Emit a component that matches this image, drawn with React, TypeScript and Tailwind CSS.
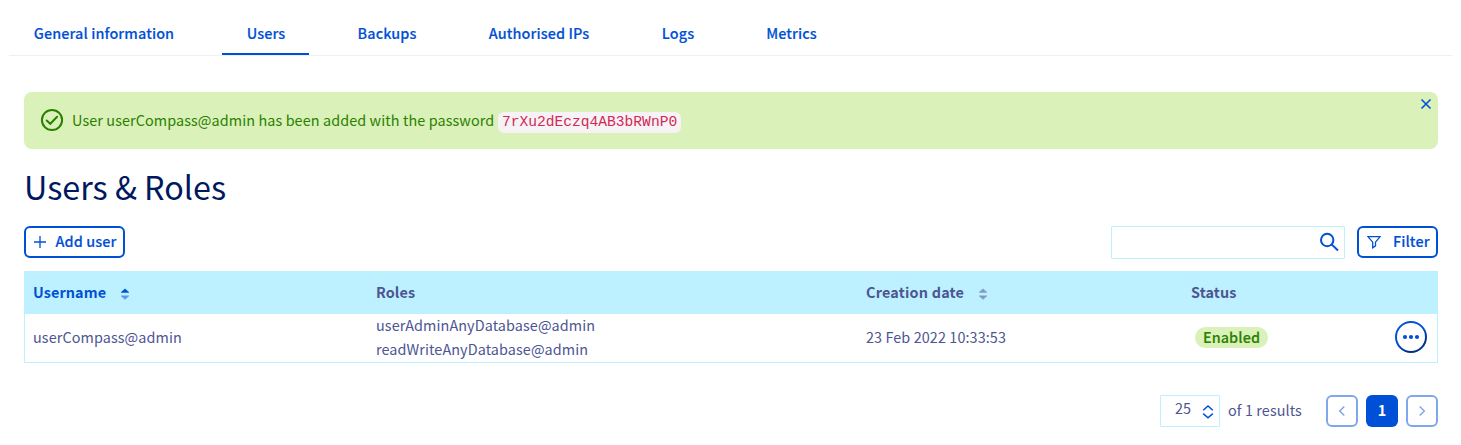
import React from "react";

const tabs = [
  { label: "General information", width: "w-[189px]", active: false },
  { label: "Users", width: "w-[87px]", active: true },
  { label: "Backups", width: "w-[107px]", active: false },
  { label: "Authorised IPs", width: "w-[149px]", active: false },
  { label: "Logs", width: "w-[81px]", active: false },
  { label: "Metrics", width: "w-[98px]", active: false },
];

function SortIcon({ className, dim }: { className: string; dim: boolean }) {
  return (
    <svg width="10" height="12" viewBox="0 0 10 12" className={className} fill="currentColor" stroke="currentColor" strokeWidth="0.8" strokeLinejoin="round">
      <path d="M1.3 4.3 5 .9l3.7 3.4z" opacity={dim ? 0.55 : 1} />
      <path d="M1.3 7.9h7.4L5 11.3z" opacity="0.55" />
    </svg>
  );
}

export default function App() {
  return (
    <div className="h-[445px] w-[1461px] overflow-hidden bg-white font-['Noto_Sans_CJK_SC','Noto_Sans_CJK_JP',sans-serif] text-[14.4px] leading-6 tracking-[0.095px] text-[#4d5592]">
      <nav className="mx-[9px] flex h-14 gap-6 border-b border-[#e6f1fa] pt-3">
        {tabs.map((tab) => (
          <a
            key={tab.label}
            className={`${tab.width} ${tab.active ? "border-[#0050d7]" : "border-transparent"} flex h-[43px] justify-center whitespace-nowrap border-b-2 pl-px pt-[9px] font-medium text-[#0050d7] [-webkit-text-stroke:0.15px]`}
          >
            {tab.label}
          </a>
        ))}
      </nav>

      <main className="mx-6 w-[1414px] pt-9">
        <div className="flex h-[57px] items-start rounded-lg bg-[#daf1b9] pl-4 text-[#2b8000]">
          <svg width="24" height="24" viewBox="0 0 24 24" className="mt-4 shrink-0" fill="none" stroke="currentColor" strokeWidth="2">
            <circle cx="12" cy="12" r="10.1" />
            <path d="m6.7 12.5 3.6 3.3 6.8-7" strokeLinecap="round" />
          </svg>
          <p className="ml-2 mt-4 flex whitespace-nowrap">
            <span className="w-[422px]">User userCompass@admin has been added with the password</span>
            <code className="ml-1 mt-1 h-[21px] w-[183px] rounded-md bg-[#f7f2f6] px-1 font-['Liberation_Mono',monospace] text-[14.6px] leading-[21px] tracking-normal text-[#cf2a55]">
              7rXu2dEczq4AB3bRWnP0
            </code>
          </p>
          <svg width="12" height="12" viewBox="0 0 12 12" className="ml-auto mr-1.5 mt-1.5 text-[#0050d7]" fill="none" stroke="currentColor" strokeWidth="1.6">
            <path d="m1.5 1.5 9 9m0-9-9 9" />
          </svg>
        </div>

        <h1 className="mt-[15px] h-[46px] text-[32.3px] leading-[45px] tracking-normal text-[#00185e]">Users &amp; Roles</h1>

        <div className="mt-4 flex h-[33px] items-start">
          <button className="flex h-8 w-[101px] items-center rounded-md border-2 border-[#0050d7] pl-2 font-medium text-[#0050d7]">
            <svg width="12" height="12" viewBox="0 0 12 12" fill="none" stroke="currentColor" strokeWidth="1.3">
              <path d="M6 0v12M0 6h12" />
            </svg>
            <span className="mb-0.5 ml-[9.5px] whitespace-nowrap [-webkit-text-stroke:0.15px]">Add user</span>
          </button>
          <div className="ml-auto flex h-[33px] w-[234px] items-start justify-end rounded-[1px] border border-[#bef1ff] pr-[5px] pt-[5px] text-[#0050d7]">
            <svg width="20" height="20" viewBox="0 0 20 20" fill="none" stroke="currentColor" strokeWidth="2">
              <circle cx="8.2" cy="8" r="6.2" />
              <path d="m12.6 12.4 6.4 6.1" />
            </svg>
          </div>
          <button className="ml-3 flex h-8 w-[81px] items-center rounded-md border-2 border-[#0050d7] pl-2 font-medium text-[#0050d7]">
            <svg width="14" height="14" viewBox="0 0 14 14" fill="none" stroke="currentColor" strokeWidth="1.3">
              <path d="M.9 1.6h12.2L8.5 7.2v3.6l-2.8 2V7.2z" />
            </svg>
            <span className="mb-0.5 ml-3 [-webkit-text-stroke:0.15px]">Filter</span>
          </button>
        </div>

        <div className="mt-3 h-[92px] border border-[#bef1ff]">
          <div className="grid h-[42px] grid-cols-[343px_490px_325px_1fr] items-center bg-[#bef1ff] pb-0.5 pl-2 font-bold">
            <div className="flex items-center text-[#0050d7]">
              Username
              <SortIcon className="ml-3.5 mt-1" dim={false} />
            </div>
            <div>Roles</div>
            <div className="flex items-center">
              <span className="tracking-[0.2px]">Creation date</span>
              <SortIcon className="ml-3.5 mt-1" dim />
            </div>
            <div>Status</div>
          </div>
          <div className="grid h-12 grid-cols-[343px_490px_325px_1fr] grid-rows-[46px] items-center pl-2">
            <div>userCompass@admin</div>
            <div>
              <div>userAdminAnyDatabase@admin</div>
              <div>readWriteAnyDatabase@admin</div>
            </div>
            <div>23 Feb 2022 10:33:53</div>
            <div className="flex items-center justify-between pl-1 pr-2.5">
              <span className="flex h-[21px] w-[73px] items-center justify-center rounded-full bg-[#daf1b9] font-medium text-[#2b8000] [-webkit-text-stroke:0.15px]">
                Enabled
              </span>
              <svg width="32" height="32" viewBox="0 0 32 32">
                <defs>
                  <linearGradient id="ring" x1="0.2" y1="0" x2="0.8" y2="1">
                    <stop offset="0.45" stopColor="#0050d7" />
                    <stop offset="0.8" stopColor="#00308a" />
                  </linearGradient>
                </defs>
                <circle cx="16" cy="16" r="15" fill="white" stroke="url(#ring)" strokeWidth="2" />
                <g fill="#0050d7">
                  <circle cx="10" cy="16" r="2.1" />
                  <circle cx="16" cy="16" r="2.1" />
                  <circle cx="22" cy="16" r="2.1" />
                </g>
              </svg>
            </div>
          </div>
        </div>

        <div className="mt-8 flex h-8 items-center justify-end">
          <div className="flex h-8 w-[60px] items-start rounded-[1px] border border-[#bef1ff] pl-3.5">
            <span className="w-4">25</span>
            <svg width="12" height="14" viewBox="0 0 12 14" className="ml-[11px] mt-[9px]" fill="none" stroke="#0050d7" strokeWidth="1.5">
              <path d="M1.2 5.2 6 1l4.8 4.2M1.2 8.6 6 12.8l4.8-4.2" />
            </svg>
          </div>
          <span className="mb-0.5 ml-2 w-[98px] whitespace-nowrap">of 1 results</span>
          <div className="flex gap-2">
            <button className="flex size-8 items-center justify-center rounded-md border-2 border-[#7fa7eb] text-[#7fa7eb]">
              <svg width="8" height="12" viewBox="0 0 8 12" fill="none" stroke="currentColor" strokeWidth="1.5">
                <path d="M6.3 1.5 1.7 6l4.6 4.5" />
              </svg>
            </button>
            <button className="flex size-8 items-center justify-center rounded-md bg-[#0050d7] pb-0.5 font-bold text-white">1</button>
            <button className="flex size-8 items-center justify-center rounded-md border-2 border-[#7fa7eb] text-[#7fa7eb]">
              <svg width="8" height="12" viewBox="0 0 8 12" fill="none" stroke="currentColor" strokeWidth="1.5">
                <path d="M1.7 1.5 6.3 6l-4.6 4.5" />
              </svg>
            </button>
          </div>
        </div>
      </main>
    </div>
  );
}
